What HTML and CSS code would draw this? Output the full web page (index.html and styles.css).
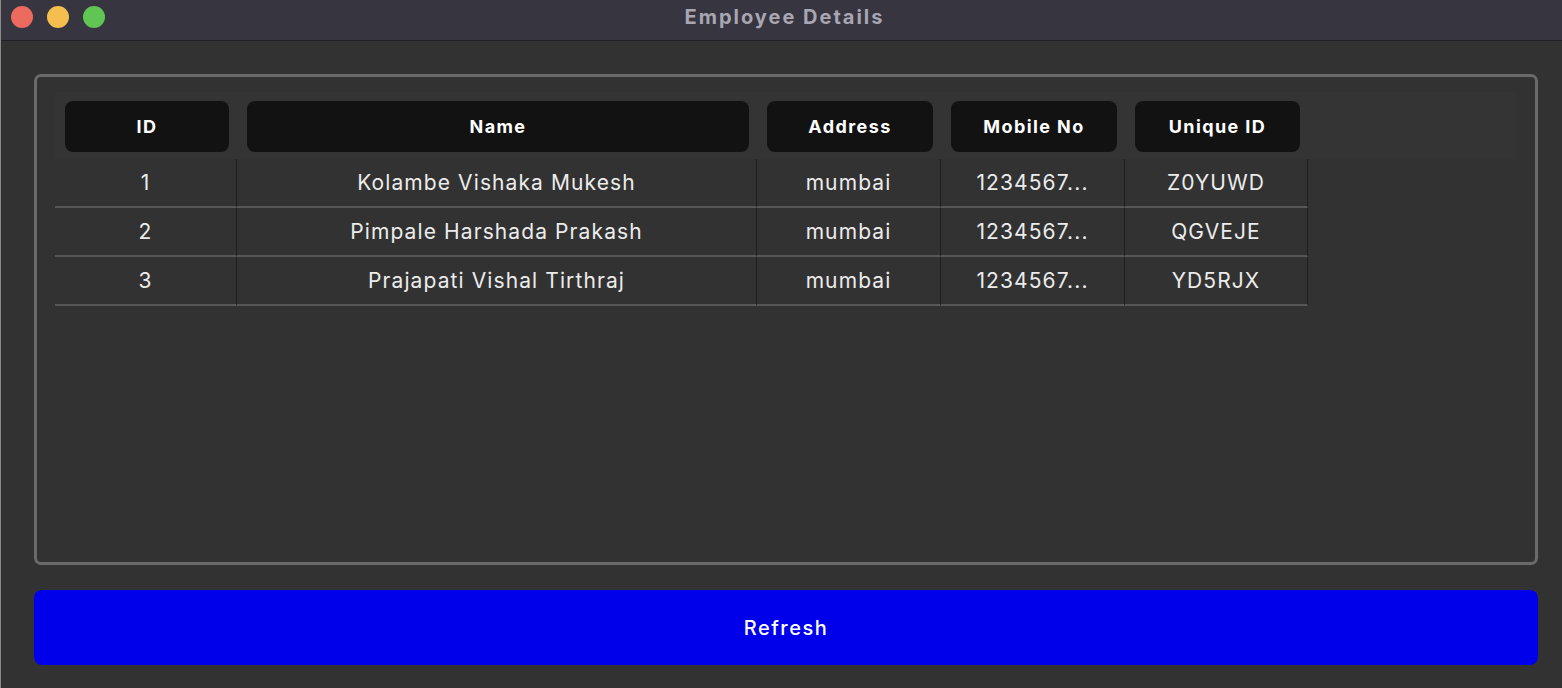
FILE: index.html
```html
<!DOCTYPE html>
<html lang="en">
<head>
  <meta charset="UTF-8" />
  <meta name="viewport" content="width=device-width, initial-scale=1.0"/>
  <title>Employee Details</title>
  <link rel="stylesheet" href="styles.css">
</head>
<body>
  <div class="window">
    <div class="titlebar">
      <div class="lights">
        <span class="light red"></span>
        <span class="light yellow"></span>
        <span class="light green"></span>
      </div>
      <div class="title">Employee Details</div>
      <div></div>
    </div>

    <div class="content">
      <div class="frame">
        <div class="table">
          <div class="head-row">
            <div class="head-cell"><span>ID</span></div>
            <div class="head-cell"><span>Name</span></div>
            <div class="head-cell"><span>Address</span></div>
            <div class="head-cell"><span>Mobile No</span></div>
            <div class="head-cell"><span>Unique ID</span></div>
          </div>

          <div class="row">
            <div class="cell">1</div>
            <div class="cell">Kolambe Vishaka Mukesh</div>
            <div class="cell">mumbai</div>
            <div class="cell">1234567...</div>
            <div class="cell">Z0YUWD</div>
          </div>
          <div class="row">
            <div class="cell">2</div>
            <div class="cell">Pimpale Harshada Prakash</div>
            <div class="cell">mumbai</div>
            <div class="cell">1234567...</div>
            <div class="cell">QGVEJE</div>
          </div>
          <div class="row">
            <div class="cell">3</div>
            <div class="cell">Prajapati Vishal Tirthraj</div>
            <div class="cell">mumbai</div>
            <div class="cell">1234567...</div>
            <div class="cell">YD5RJX</div>
          </div>
        </div>
      </div>

      <button class="refresh">Refresh</button>
    </div>
  </div>
</body>
</html>
```

FILE: styles.css
```css
body {
  margin: 0;
  background-color: #323232;
  font-family: Inter, "Noto Sans", sans-serif;
  color: #ececec;
}
.window {
  height: 688px;
  border-left: 1px solid #8a8a8a;
  box-sizing: border-box;
}
.titlebar {
  height: 41px;
  box-sizing: border-box;
  padding: 0 0 6px 10px;
  background-color: #37353f;
  border-bottom: 1px solid #222125;
  display: grid;
  grid-template-columns: 1fr auto 1fr;
  align-items: center;
}
.lights {
  display: flex;
  gap: 14px;
}
.light {
  width: 22px;
  height: 22px;
  border-radius: 50%;
}
.red { background-color: #ec6a5e; }
.yellow { background-color: #f4bf4f; }
.green { background-color: #61c554; }
.title {
  font-size: 20px;
  font-weight: 700;
  color: #a8a6b2;
  letter-spacing: 2px;
  padding-right: 4px;
}

.content {
  padding: 33px 24px 0 33px;
}
.frame {
  height: 491px;
  box-sizing: border-box;
  border: 3px solid #6a6a6a;
  border-radius: 7px;
  padding: 15px 18px;
}
.head-row, .row {
  display: grid;
  grid-template-columns: 182px 520px 184px 184px 183px;
}
.head-row {
  background-color: #343434;
  padding: 9px 0 7px;
}
.head-cell {
  padding: 0 8px 0 10px;
}
.head-cell span {
  display: flex;
  align-items: center;
  justify-content: center;
  height: 51px;
  background-color: #121212;
  border-radius: 8px;
  color: #fff;
  font-size: 18px;
  font-weight: 700;
  letter-spacing: 1.4px;
}
.row {
  width: max-content;
}
.cell {
  height: 47px;
  display: flex;
  align-items: center;
  justify-content: center;
  font-size: 21px;
  letter-spacing: 1.1px;
  white-space: nowrap;
  border-right: 1px solid #1d1d1d;
  border-bottom: 2px solid #565656;
}

.refresh {
  display: block;
  width: 100%;
  height: 75px;
  margin-top: 25px;
  border: none;
  border-radius: 8px;
  background-color: #0000ea;
  color: #fff;
  font-family: Inter, "Noto Sans", sans-serif;
  font-size: 20px;
  font-weight: 500;
  letter-spacing: 1.5px;
}
```
